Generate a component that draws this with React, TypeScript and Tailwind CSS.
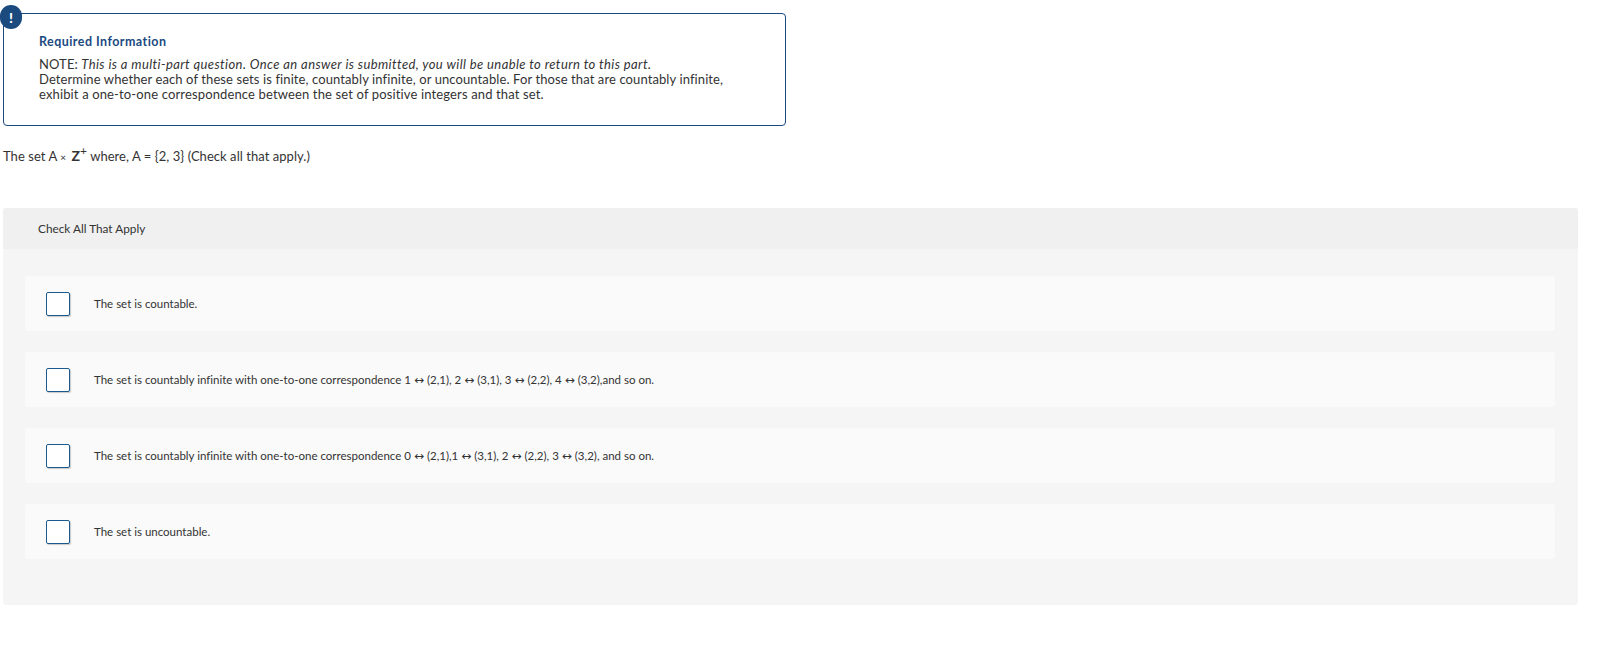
const Arrow = () => <span className="font-['DejaVu_Sans',sans-serif] text-[12px] leading-none">↔</span>;

const choices = [
  <>The set is countable.</>,
  <>The set is countably infinite with one-to-one correspondence 1 <Arrow /> (2,1), 2 <Arrow /> (3,1), 3 <Arrow /> (2,2), 4 <Arrow /> (3,2),and so on.</>,
  <>The set is countably infinite with one-to-one correspondence 0 <Arrow /> (2,1),1 <Arrow /> (3,1), 2 <Arrow /> (2,2), 3 <Arrow /> (3,2), and so on.</>,
  <>The set is uncountable.</>,
];

const App = () => {
  return (
    <div className="min-h-[670px] bg-white pl-[3px] pr-[27px] pt-[13px] font-['Lato',sans-serif] text-[#333333] [font-variant-ligatures:none]">
      <div className="relative h-[113px] w-[783px] rounded-[4px] border border-[#1b4a7f] pl-[35px] pt-[20px] text-[13px] leading-[15px] tracking-[0.1px]">
        <div className="absolute left-[-4px] top-[-9px] flex h-[24px] w-[22px] items-center justify-center rounded-full bg-[#1b4a7f] text-[14px] font-black text-white">
          !
        </div>
        <h2 className="text-[12.5px] font-bold tracking-[0.45px] text-[#1b4a7f]">Required Information</h2>
        <p className="mt-[8px]">
          NOTE: <em className="tracking-[0.4px]">This is a multi-part question. Once an answer is submitted, you will be unable to return to this part.</em>
        </p>
        <p>Determine whether each of these sets is finite, countably infinite, or uncountable. For those that are countably infinite,</p>
        <p className="tracking-[0.14px]">exhibit a one-to-one correspondence between the set of positive integers and that set.</p>
      </div>

      <p className="mt-[20px] h-[20px] text-[13px] leading-[20px] tracking-[0.05px]">
        The set A <span className="text-[10px]">×</span> <b className="ml-[2px] text-[14px]">Z</b>
        <sup className="text-[12px]">+</sup> where, A = {"{2, 3}"} (Check all that apply.)
      </p>

      <section className="mt-[42px] h-[397px] rounded-[3px] bg-[#f5f5f5]">
        <div className="flex h-[41px] items-center rounded-t-[3px] bg-[#f0f0f0] pl-[35px] text-[11.8px]">Check All That Apply</div>
        <ul className="flex flex-col gap-[21px] pl-[22px] pr-[23px] pt-[27px]">
          {choices.map((choice, i) => (
            <li key={i} className="flex h-[55px] items-center rounded-[3px] bg-[#fafafa] pl-[21px] text-[11.5px]">
              <span className="h-[24px] w-[24px] shrink-0 rounded-[2px] border border-[#1b5a8f] bg-white shadow-[1px_1px_1px_#c8c8c8]" />
              <span className="ml-[24px]">{choice}</span>
            </li>
          ))}
        </ul>
      </section>
    </div>
  );
};

export default App;
